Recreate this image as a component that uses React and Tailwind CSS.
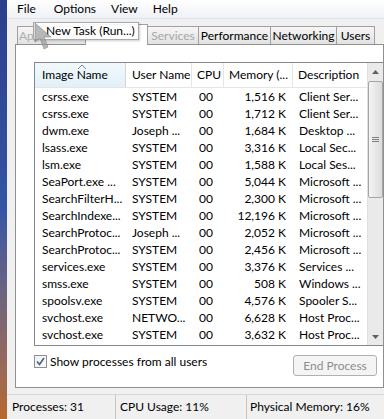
import React from 'react';

const rows = [
    ['csrss.exe', 'SYSTEM', '00', '1,516 K', 'Client Ser...'],
    ['csrss.exe', 'SYSTEM', '00', '1,712 K', 'Client Ser...'],
    ['dwm.exe', 'Joseph ...', '00', '1,684 K', 'Desktop ...'],
    ['lsass.exe', 'SYSTEM', '00', '3,316 K', 'Local Sec...'],
    ['lsm.exe', 'SYSTEM', '00', '1,588 K', 'Local Ses...'],
    ['SeaPort.exe ...', 'SYSTEM', '00', '5,044 K', 'Microsoft ...'],
    ['SearchFilterH...', 'SYSTEM', '00', '2,300 K', 'Microsoft ...'],
    ['SearchIndexe...', 'SYSTEM', '00', '12,196 K', 'Microsoft ...'],
    ['SearchProtoc...', 'Joseph ...', '00', '2,052 K', 'Microsoft ...'],
    ['SearchProtoc...', 'SYSTEM', '00', '2,456 K', 'Microsoft ...'],
    ['services.exe', 'SYSTEM', '00', '3,376 K', 'Services ...'],
    ['smss.exe', 'SYSTEM', '00', '508 K', 'Windows ...'],
    ['spoolsv.exe', 'SYSTEM', '00', '4,576 K', 'Spooler S...'],
    ['svchost.exe', 'NETWO...', '00', '6,628 K', 'Host Proc...'],
    ['svchost.exe', 'SYSTEM', '00', '3,632 K', 'Host Proc...'],
];

const Tab = ({ label, w }) => (
    <div className={`h-[18px] border border-[#a0a0a0] border-b-0 bg-gradient-to-b from-[#f6f6f6] to-[#e2e2e2] flex items-center justify-center whitespace-nowrap -ml-px ${w}`}>
        {label}
    </div>
);

export default function App() {
    return (
        <div
            className="w-[384px] h-[419px] relative overflow-hidden flex bg-[#f0f0f0] text-[12px] text-black"
            style={{ fontFamily: 'Lato, "Noto Sans", sans-serif' }}
        >
            {/* desktop edge */}
            <div className="w-[7px] shrink-0 bg-gradient-to-b from-[#2a3f8c] via-[#3454a4] to-[#b8682c]" />

            <div className="flex-1 flex flex-col min-w-0">
                {/* menu */}
                <div className="h-[19px] flex items-center gap-[15px] pl-[10px] bg-gradient-to-b from-[#ffffff] to-[#eef1f6] border-b border-[#dfe3ea] leading-none">
                    <span>File</span>
                    <span className="ml-[3px]">Options</span>
                    <span>View</span>
                    <span>Help</span>
                </div>

                {/* tabs (the selected Processes tab sits under the tooltip) */}
                <div className="h-[25px] flex items-end pl-[10px] leading-none">
                    <Tab label="Applications" w="w-[69px] ml-0 text-[#b0b0b0]" />
                    <div className="h-[21px] w-[63px] -ml-px border border-[#a0a0a0] border-b-0 bg-white relative z-10 -mb-px" />
                    <Tab label="Services" w="w-[52px] text-[#a8a8a8]" />
                    <Tab label="Performance" w="w-[73px]" />
                    <Tab label="Networking" w="w-[67px]" />
                    <Tab label="Users" w="w-[39px]" />
                </div>

                {/* tab page */}
                <div className="h-[344px] ml-[8px] border border-[#8e8f8f] bg-white flex flex-col pl-[18px] pt-[17px]">
                    <div className="h-[284px] border border-[#828790] border-r-0 flex">
                        <div className="flex-1 flex flex-col min-w-0">
                            {/* header */}
                            <div className="h-[25px] flex border-b border-[#e5e5e5] leading-none whitespace-nowrap">
                                <div className="w-[91px] relative flex items-center pl-[7px] bg-gradient-to-b from-[#f2f9fc] to-[#e1f0f9] border-r border-[#d5d5d5]">
                                    <svg className="absolute left-[43px] top-[2px]" width="8" height="4" viewBox="0 0 8 4">
                                        <path d="M0 4 L4 0 L8 4" fill="none" stroke="#7a8ca0" strokeWidth="1" />
                                    </svg>
                                    Image Name
                                </div>
                                <div className="w-[66px] flex items-center pl-[6px] border-r border-[#e5e5e5]">User Name</div>
                                <div className="w-[32px] flex items-center pl-[5px] border-r border-[#e5e5e5]">CPU</div>
                                <div className="w-[69px] flex items-center pl-[5px] border-r border-[#e5e5e5]">Memory (...</div>
                                <div className="flex-1 flex items-center pl-[5px]">Description</div>
                            </div>
                            {rows.map((r, i) => (
                                <div key={i} className="h-[17px] flex items-center leading-none whitespace-nowrap">
                                    <div className="w-[91px] pl-[7px]">{r[0]}</div>
                                    <div className="w-[66px] pl-[6px]">{r[1]}</div>
                                    <div className="w-[32px] pl-[7px]">{r[2]}</div>
                                    <div className="w-[69px] pr-[7px] text-right">{r[3]}</div>
                                    <div className="flex-1 pl-[6px]">{r[4]}</div>
                                </div>
                            ))}
                        </div>
                        {/* scrollbar */}
                        <div className="w-[16px] shrink-0 bg-[#eaeaea] border-l border-[#e0e0e0] flex flex-col items-center">
                            <div className="h-[18px] w-full flex items-center justify-center">
                                <svg width="7" height="4" viewBox="0 0 7 4"><path d="M0 4 L3.5 0 L7 4 Z" fill="#606060" /></svg>
                            </div>
                            <div className="h-[117px] w-[15px] border border-[#a5a5a5] rounded-[2px] bg-gradient-to-r from-[#f4f4f4] to-[#dcdcdc] flex items-center justify-center">
                                <svg width="7" height="6" viewBox="0 0 7 6">
                                    <path d="M0 0.5 H7 M0 2.5 H7 M0 4.5 H7" stroke="#808080" strokeWidth="1" />
                                </svg>
                            </div>
                            <div className="flex-1" />
                            <div className="h-[17px] w-full flex items-center justify-center">
                                <svg width="7" height="4" viewBox="0 0 7 4"><path d="M0 0 L3.5 4 L7 0 Z" fill="#606060" /></svg>
                            </div>
                        </div>
                    </div>

                    {/* bottom controls */}
                    <div className="flex items-start mt-[9px] pr-[6px] leading-none">
                        <div className="w-[13px] h-[13px] border border-[#8f8f8f] bg-gradient-to-br from-[#eef0f2] to-[#fbfbfb] flex items-center justify-center">
                            <svg width="9" height="9" viewBox="0 0 9 9">
                                <path d="M1 4.5 L3.5 7.5 L8 1" fill="none" stroke="#4a5f8a" strokeWidth="1.6" />
                            </svg>
                        </div>
                        <span className="ml-[3px] h-[13px] flex items-center">Show processes from all users</span>
                        <div className="flex-1" />
                        <div className="w-[84px] h-[21px] border border-[#adb2b5] rounded-[3px] bg-[#f4f4f4] text-[#8d8d8d] flex items-center justify-center">
                            End Process
                        </div>
                    </div>
                </div>

                {/* status bar */}
                <div className="flex-1 mt-[6px] border-t border-[#d7d7d7] flex items-center leading-none">
                    <div className="w-[109px] pl-[5px] border-r border-[#c5c5c5] h-full flex items-center">Processes: 31</div>
                    <div className="w-[131px] pl-[4px] border-r border-[#c5c5c5] h-full flex items-center">CPU Usage: 11%</div>
                    <div className="flex-1 pl-[3px] h-full flex items-center">Physical Memory: 16%</div>
                </div>
            </div>

            {/* tooltip over the tabs */}
            <div className="absolute z-20 left-[33px] top-[22px] w-[106px] h-[18px] border border-[#a8a8a8] bg-white/90 shadow-[1px_1px_2px_rgba(0,0,0,0.2)] flex items-center pl-[12px] leading-none whitespace-nowrap">
                New Task (Run...)
            </div>
            {/* cursor */}
            <svg className="absolute z-30 left-[33px] top-[22px]" width="24" height="30" viewBox="0 0 24 30">
                <path d="M2 1 L2 20 L7 16 L11 27 L15 25 L11 15 L18 15 Z" fill="#9a9a9a" fillOpacity="0.7" stroke="#7a7a7a" strokeOpacity="0.5" />
            </svg>
        </div>
    );
}
